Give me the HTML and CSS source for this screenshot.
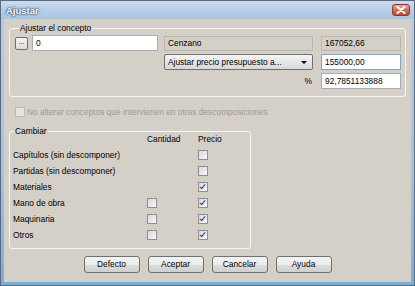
FILE: index.html
```html
<!DOCTYPE html>
<html lang="es">
<head>
<meta charset="utf-8">
<title>Ajustar</title>
<link rel="stylesheet" href="styles.css">
</head>
<body>
<div class="window">
  <div class="titlebar">
    <span class="title">Ajustar</span>
    <span class="close"><svg width="10" height="8" viewBox="0 0 10 8"><path d="M1.5 1 L8.5 7 M8.5 1 L1.5 7" stroke="#fff" stroke-width="2" stroke-linecap="round"/></svg></span>
  </div>
  <div class="client">
    <fieldset class="group group-concept">
      <legend>Ajustar el concepto</legend>
      <div class="row">
        <span class="btn-dots">...</span>
        <span class="field field-code">0</span>
        <span class="field ro field-name">Cenzano</span>
        <span class="field ro field-num">167052,66</span>
      </div>
      <div class="row">
        <span class="spacer"></span>
        <span class="select">Ajustar precio presupuesto a...<span class="arrow"></span></span>
        <span class="field focus field-num">155000,00</span>
      </div>
      <div class="row">
        <span class="spacer"></span>
        <span class="pct">%</span>
        <span class="field field-num">92,7851133888</span>
      </div>
    </fieldset>

    <div class="opt disabled"><span class="cb dis"></span><span>No alterar conceptos que intervienen en otras descomposiciones</span></div>

    <fieldset class="group group-change">
      <legend>Cambiar</legend>
      <div class="grid">
        <span></span><span>Cantidad</span><span>Precio</span>

        <span>Capítulos (sin descomponer)</span><span></span><span class="cb"></span>
        <span>Partidas (sin descomponer)</span><span></span><span class="cb"></span>
        <span>Materiales</span><span></span><span class="cb on"></span>
        <span>Mano de obra</span><span class="cb"></span><span class="cb on"></span>
        <span>Maquinaria</span><span class="cb"></span><span class="cb on"></span>
        <span>Otros</span><span class="cb"></span><span class="cb on"></span>
      </div>
    </fieldset>

    <div class="buttons">
      <span class="btn">Defecto</span>
      <span class="btn">Aceptar</span>
      <span class="btn">Cancelar</span>
      <span class="btn">Ayuda</span>
    </div>
  </div>
</div>
</body>
</html>
```
FILE: styles.css
```css
html, body {
  margin: 0;
  padding: 0;
  background: #ffffff;
}
body {
  font-family: "Liberation Sans", Arial, sans-serif;
  font-size: 8.4px;
  color: #000;
}
.window {
  width: 415px;
  height: 286px;
  box-sizing: border-box;
  border: 1px solid #5b6a7e;
  background: linear-gradient(#b4cce8, #a5c2e4 60%, #6fb3da);
  padding: 0 3px 3px;
  display: flex;
  flex-direction: column;
}
.titlebar {
  height: 18px;
  margin: 0 -3px;
  padding: 0 4px 0 5px;
  display: flex;
  align-items: center;
  justify-content: space-between;
  background: linear-gradient(#cddcee, #b7cde9 50%, #a9c5e6);
}
.title {
  color: #fff;
  font-weight: bold;
  font-size: 9.5px;
  text-shadow: 0 0 2px #2d4d75, 0 0 1px #2d4d75, 0 0 3px #4a6c96;
}
.close {
  width: 18px;
  height: 12px;
  box-sizing: border-box;
  border: 1px solid #8a3b2e;
  border-radius: 3px;
  background: linear-gradient(#e6a99a, #d46f5a 50%, #c4472f);
  display: flex;
  align-items: center;
  justify-content: center;
}
.client {
  flex: 1;
  background: #d4d0c8;
  padding: 3px 5px 0 5px;
  display: flex;
  flex-direction: column;
  align-items: flex-start;
}
.group {
  margin: 0;
  min-width: 0;
  box-sizing: border-box;
  border: 1px solid #f6f5f2;
  border-radius: 3px;
}
.group legend {
  padding: 0 1px;
  line-height: 12px;
}
.group-concept {
  width: 397px;
  padding: 1px 4px 7px 5px;
}
.group-concept legend {
  margin-left: 4px;
}
.row {
  display: flex;
  align-items: center;
  height: 16px;
}
.row + .row {
  margin-top: 3px;
}
.btn-dots {
  width: 13px;
  height: 13px;
  box-sizing: border-box;
  border: 1px solid #707070;
  border-radius: 2px;
  background: linear-gradient(#f4f4f4, #dcdcdc);
  font-size: 7px;
  line-height: 8px;
  text-align: center;
}
.field {
  box-sizing: border-box;
  height: 16px;
  border: 1px solid #a7abb3;
  background: #fff;
  padding: 0 3px;
  line-height: 14px;
  white-space: nowrap;
}
.field.ro {
  height: 15px;
  background: #d4d0c8;
  border-color: #bab7b0;
  line-height: 13px;
}
.field.focus {
  border-color: #7ea4cf;
}
.field-code {
  width: 126px;
  margin-left: 4px;
}
.field-name {
  width: 149px;
  margin-left: 6px;
}
.field-num {
  width: 80px;
  margin-left: 8px;
}
.spacer {
  width: 149px;
  flex: none;
}
.select {
  box-sizing: border-box;
  width: 149px;
  height: 16px;
  border: 1px solid #707070;
  border-radius: 2px;
  background: linear-gradient(#f4f4f4, #e6e6e6 50%, #d8d8d8);
  padding: 0 3px;
  line-height: 14px;
  display: flex;
  justify-content: space-between;
  align-items: center;
}
.arrow {
  width: 0;
  height: 0;
  border-left: 3px solid transparent;
  border-right: 3px solid transparent;
  border-top: 3px solid #000;
  margin-right: 2px;
}
.pct {
  width: 149px;
  text-align: right;
  padding-right: 1px;
  box-sizing: border-box;
}
.opt {
  margin-top: 10px;
  margin-left: 6px;
  display: flex;
  align-items: center;
  gap: 2px;
  height: 10px;
}
.opt.disabled {
  color: #9d9a93;
}
.cb {
  display: block;
  width: 10px;
  height: 10px;
  box-sizing: border-box;
  border: 1px solid #8f8f8f;
  background: linear-gradient(135deg, #d8d8d8, #f8f8f8);
  position: relative;
}
.cb.dis {
  border-color: #bdbab3;
  background: #e6e4df;
}
.cb.on::after {
  content: "";
  position: absolute;
  left: 2px;
  top: 0px;
  width: 2px;
  height: 5px;
  border-right: 1.5px solid #22389a;
  border-bottom: 1.5px solid #22389a;
  transform: rotate(40deg);
}
.group-change {
  width: 242px;
  margin-top: 8px;
  padding: 0 4px 5px 3px;
}
.group-change legend {
  margin-left: 1px;
}
.grid {
  display: grid;
  grid-template-columns: 134px 51px 1fr;
  grid-auto-rows: 16px;
  align-items: center;
  margin-top: -6px;
}
.buttons {
  align-self: stretch;
  margin-top: 7px;
  display: flex;
  justify-content: center;
  gap: 8px;
}
.btn {
  width: 56px;
  height: 17px;
  box-sizing: border-box;
  border: 1px solid #707070;
  border-radius: 3px;
  background: linear-gradient(#f3f3f3, #ebebeb 50%, #dddddd 51%, #cfcfcf);
  text-align: center;
  line-height: 15px;
}
```
